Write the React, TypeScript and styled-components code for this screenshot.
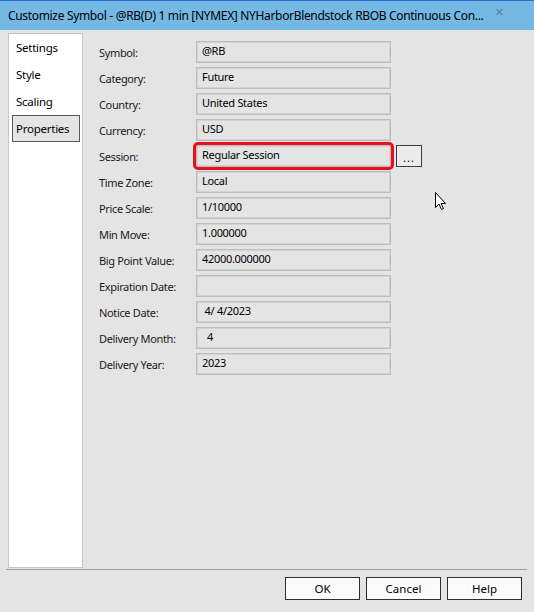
import React from "react";
import styled, { createGlobalStyle } from "styled-components";

const Global = createGlobalStyle`
  html, body { margin: 0; padding: 0; }
  body { font-family: "Segoe UI", "Noto Sans", "Open Sans", sans-serif; font-size: 11px; color: #000; }
`;

const Window = styled.div`
  position: relative;
  width: 534px;
  height: 612px;
  background: #e4e4e4;
  display: flex;
  flex-direction: column;
  overflow: hidden;
`;

const TitleBar = styled.div`
  height: 29px;
  border-top: 1px solid #2a6ee0;
  background: #74b8e4;
  display: flex;
  align-items: center;
  padding-left: 8px;
  padding-right: 30px;
  box-sizing: content-box;
`;

const TitleText = styled.div`
  flex: 1;
  white-space: nowrap;
  font-size: 12px;
  letter-spacing: -0.33px;
  padding-bottom: 1px;
`;

const Close = styled.div`
  color: #557d99;
  font-size: 11px;
  font-family: "DejaVu Sans", sans-serif;
  margin-bottom: 7px;
`;

const Main = styled.div`
  height: 539px;
  margin: 0 7px 0 6px;
  border-bottom: 1px solid #a2a2a2;
  display: flex;
`;

const Sidebar = styled.div`
  margin: 3px 0 1px 2px;
  width: 73px;
  background: #fff;
  border: 1px solid #c5c5c5;
  display: flex;
  flex-direction: column;
`;

const NavItem = styled.div<{ $active?: boolean }>`
  height: 27px;
  margin-left: 3px;
  width: 68px;
  display: flex;
  align-items: center;
  padding-left: 3px;
  box-sizing: border-box;
  border: 1px solid ${(p) => (p.$active ? "#5a5a5a" : "transparent")};
  background: ${(p) => (p.$active ? "#e4e4e4" : "transparent")};
  padding-bottom: 1px;
  font-size: 11.5px;
  letter-spacing: -0.25px;
`;

const Content = styled.div`
  flex: 1;
  padding: 11px 0 0 16px;
  display: grid;
  grid-template-columns: 92px 195px 26px;
  grid-auto-rows: 22px;
  row-gap: 4px;
  column-gap: 5px;
  align-content: start;
`;

const Label = styled.div`
  grid-column: 1;
  padding-top: 4px;
  letter-spacing: -0.35px;
  color: #1a1a1a;
`;

const Field = styled.div<{ $highlight?: boolean }>`
  grid-column: 2;
  border: 1px solid #bdbdbd;
  box-shadow: inset 0 0 0 1px #d3d3d3;
  box-sizing: border-box;
  padding: 1px 0 0 5px;
  white-space: pre;
  letter-spacing: -0.3px;
  border-radius: ${(p) => (p.$highlight ? "2px" : "0")};
  outline: ${(p) => (p.$highlight ? "3px solid #e8101c" : "none")};
  outline-offset: 0;
`;

const DotsButton = styled.div`
  grid-column: 3;
  border: 1px solid #3c3c3c;
  background: #ececec;
  box-sizing: border-box;
  display: flex;
  align-items: center;
  justify-content: center;
  padding-top: 2px;
  font-size: 11px;
  letter-spacing: 1px;
`;

const Footer = styled.div`
  display: flex;
  justify-content: flex-end;
  gap: 6px;
  padding: 7px 12px 0 0;
`;

const Button = styled.div`
  width: 75px;
  height: 23px;
  box-sizing: border-box;
  border: 1px solid #2e2e2e;
  background: #fbfbfb;
  display: flex;
  align-items: center;
  justify-content: center;
  padding-bottom: 1px;
  font-size: 11.5px;
`;

const Cursor = styled.svg`
  position: absolute;
  left: 435px;
  top: 192px;
`;

const rows: { label: string; value: string; session?: boolean }[] = [
  { label: "Symbol:", value: "@RB" },
  { label: "Category:", value: "Future" },
  { label: "Country:", value: "United States" },
  { label: "Currency:", value: "USD" },
  { label: "Session:", value: "Regular Session", session: true },
  { label: "Time Zone:", value: "Local" },
  { label: "Price Scale:", value: "1/10000" },
  { label: "Min Move:", value: "1.000000" },
  { label: "Big Point Value:", value: "42000.000000" },
  { label: "Expiration Date:", value: "" },
  { label: "Notice Date:", value: " 4/ 4/2023" },
  { label: "Delivery Month:", value: "  4" },
  { label: "Delivery Year:", value: "2023" },
];

export default function App() {
  return (
    <Window>
      <Global />
      <TitleBar>
        <TitleText>
          Customize Symbol - @RB(D) 1 min [NYMEX] NYHarborBlendstock RBOB Continuous Con...
        </TitleText>
        <Close>✕</Close>
      </TitleBar>
      <Main>
        <Sidebar>
          <NavItem>Settings</NavItem>
          <NavItem>Style</NavItem>
          <NavItem>Scaling</NavItem>
          <NavItem $active>Properties</NavItem>
        </Sidebar>
        <Content>
          {rows.map((r) => (
            <React.Fragment key={r.label}>
              <Label>{r.label}</Label>
              <Field $highlight={r.session}>{r.value}</Field>
              {r.session && <DotsButton>...</DotsButton>}
            </React.Fragment>
          ))}
        </Content>
      </Main>
      <Footer>
        <Button>OK</Button>
        <Button>Cancel</Button>
        <Button>Help</Button>
      </Footer>
      <Cursor width="12" height="19" viewBox="0 0 12 19">
        <path
          d="M0.5 0.5 L0.5 15.5 L4 12 L6.5 17.5 L8.5 16.5 L6 11.5 L10.5 11.5 Z"
          fill="#fff"
          stroke="#000"
          strokeWidth="1"
          strokeLinejoin="miter"
        />
      </Cursor>
    </Window>
  );
}
